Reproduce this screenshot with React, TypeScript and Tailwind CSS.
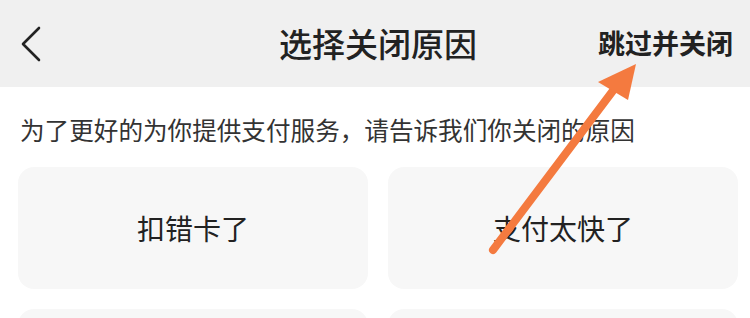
import React from 'react';

const reasons = ['扣错卡了', '支付太快了', '', ''];

const App: React.FC = () => {
    return (
        <div className="relative w-[750px] h-[318px] overflow-hidden bg-white" style={{ fontFamily: '"Noto Sans CJK SC", "Noto Sans", sans-serif' }}>
            <div className="h-[87px] bg-[#f0f0f0] flex items-center justify-between px-[16px]">
                <svg width="28" height="40" viewBox="0 0 28 40" className="ml-[2px]">
                    <path d="M21 4 L5 20 L21 36" fill="none" stroke="#222" strokeWidth="2.6" strokeLinecap="round" strokeLinejoin="round" />
                </svg>
                <div className="absolute left-0 right-0 top-0 h-[87px] flex items-center justify-center pointer-events-none">
                    <span className="text-[33px] font-medium text-[#222] ml-[6px]">选择关闭原因</span>
                </div>
                <span className="text-[27px] font-bold text-[#222] mr-[1px]">跳过并关闭</span>
            </div>
            <div className="pl-[18px]">
                <p className="text-[24.6px] leading-[36px] text-[#333] mt-[24px] ml-[2px]">为了更好的为你提供支付服务，请告诉我们你关闭的原因</p>
                <div className="grid grid-cols-2 w-[720px] gap-x-[20px] gap-y-[20px] mt-[20px]">
                    {reasons.map((r, i) => (
                        <div key={i} className="h-[122px] rounded-[16px] bg-[#f7f7f7] flex items-center justify-center">
                            <span className="text-[28px] text-[#222]">{r}</span>
                        </div>
                    ))}
                </div>
            </div>
            <svg className="absolute left-0 top-0 pointer-events-none" width="750" height="318" viewBox="0 0 750 318">
                <line x1="493" y1="250" x2="615" y2="88" stroke="#f47a3f" strokeWidth="8" strokeLinecap="round" />
                <polygon points="636,64 598,82 628,100" fill="#f47a3f" />
            </svg>
        </div>
    );
};

export default App;
